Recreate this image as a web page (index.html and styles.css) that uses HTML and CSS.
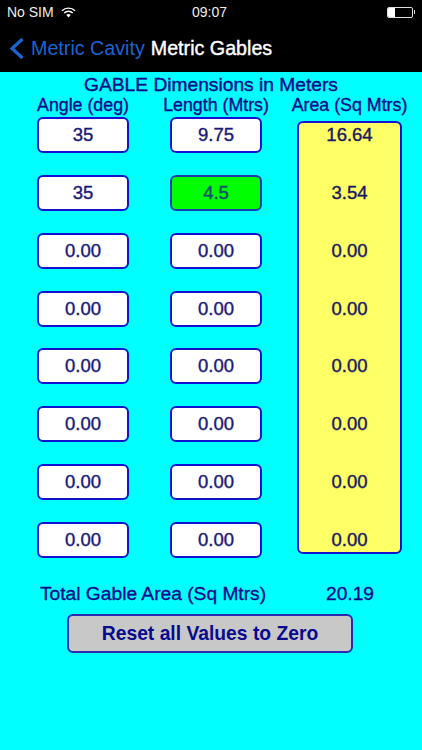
FILE: index.html
```html
<!DOCTYPE html>
<html lang="en">

<head>
    <meta charset="UTF-8">
    <meta name="viewport" content="width=device-width, initial-scale=1.0">
    <link rel="stylesheet" href="styles.css">
    <title>Metric Gables</title>
</head>

<body>
    <!-- status bar and nav -->
    <header class="top-bar">
        <div class="status-bar">
            <div class="status-left">
                <span>No SIM</span>
                <svg class="wifi" width="15" height="11" viewBox="0 0 15 11">
                    <path d="M1 3.8 A9.2 9.2 0 0 1 14 3.8" fill="none" stroke="#fff" stroke-width="1.4" />
                    <path d="M3.2 6 A6 6 0 0 1 11.8 6" fill="none" stroke="#fff" stroke-width="1.4" />
                    <path d="M5.3 8.1 A3 3 0 0 1 9.7 8.1 L7.5 10.4 Z" fill="#fff" />
                </svg>
            </div>
            <span class="status-time">09:07</span>
            <div class="battery">
                <div class="battery-body">
                    <div class="battery-level"></div>
                </div>
                <div class="battery-tip"></div>
            </div>
        </div>
        <nav class="nav-bar">
            <svg class="back-icon" width="16" height="23" viewBox="0 0 16 23">
                <path d="M13.5 2 L3 11.5 L13.5 21" fill="none" stroke="#1c64d2" stroke-width="3.2" />
            </svg>
            <span class="back-label">Metric Cavity</span>
            <span class="nav-title">Metric Gables</span>
        </nav>
    </header>

    <main class="content">
        <h1 class="page-title">GABLE Dimensions in Meters</h1>

        <div class="table">
            <div class="column column-angle">
                <div class="column-head">Angle (deg)</div>
                <div class="field">35</div>
                <div class="field">35</div>
                <div class="field">0.00</div>
                <div class="field">0.00</div>
                <div class="field">0.00</div>
                <div class="field">0.00</div>
                <div class="field">0.00</div>
                <div class="field">0.00</div>
            </div>
            <div class="column column-length">
                <div class="column-head">Length (Mtrs)</div>
                <div class="field">9.75</div>
                <div class="field field-active">4.5</div>
                <div class="field">0.00</div>
                <div class="field">0.00</div>
                <div class="field">0.00</div>
                <div class="field">0.00</div>
                <div class="field">0.00</div>
                <div class="field">0.00</div>
            </div>
            <div class="column column-area">
                <div class="column-head">Area (Sq Mtrs)</div>
                <div class="area-box">
                    <span>16.64</span>
                    <span>3.54</span>
                    <span>0.00</span>
                    <span>0.00</span>
                    <span>0.00</span>
                    <span>0.00</span>
                    <span>0.00</span>
                    <span>0.00</span>
                </div>
            </div>
        </div>

        <div class="total-row">
            <span class="total-label">Total Gable Area (Sq Mtrs)</span>
            <span class="total-value">20.19</span>
        </div>

        <button class="reset-button">Reset all Values to Zero</button>
    </main>
</body>

</html>
```

FILE: styles.css
```css
/* page */
body {
    margin: 0;
    width: 422px;
    height: 750px;
    overflow: hidden;
    background-color: #00ffff;
    font-family: "Liberation Sans", Arial, sans-serif;
    color: #0a0a8c;
}

/* top black area */
.top-bar {
    height: 72px;
    background-color: #000;
    color: #fff;
}

.status-bar {
    height: 24px;
    display: flex;
    align-items: center;
    justify-content: space-between;
    padding: 0 7px;
    font-size: 14px;
    position: relative;
    color: #eee;
}

.status-left {
    display: flex;
    align-items: center;
    gap: 7px;
}

.status-time {
    position: absolute;
    left: 192px;
}

.battery {
    display: flex;
    align-items: center;
}

.battery-body {
    width: 24px;
    height: 9px;
    border: 1px solid #ddd;
    border-radius: 2px;
    overflow: hidden;
}

.battery-level {
    width: 7px;
    height: 100%;
    background-color: #fff;
}

.battery-tip {
    width: 1.5px;
    height: 4px;
    background-color: #ddd;
    margin-left: 1px;
}

.nav-bar {
    height: 48px;
    display: flex;
    align-items: center;
    padding-left: 9px;
}

.back-icon {
    margin-right: 6px;
}

.back-label {
    font-size: 19.7px;
    color: #1c64d2;
    margin-right: 6px;
}

.nav-title {
    font-size: 19.7px;
    color: #fff;
    -webkit-text-stroke: 0.4px #fff;
}

/* main content */
.content {
    display: flex;
    flex-direction: column;
    align-items: center;
}

.page-title {
    margin: 2px 0 0;
    height: 21px;
    line-height: 21px;
    font-size: 19.2px;
    font-weight: normal;
    -webkit-text-stroke: 0.4px #0a0a8c;
}

.table {
    width: 100%;
    display: flex;
    box-sizing: border-box;
    padding-left: 37px;
}

.column {
    display: flex;
    flex-direction: column;
    align-items: center;
    gap: 21.9px;
}

.column-angle {
    width: 92px;
    margin-right: 41px;
}

.column-length {
    width: 92px;
    margin-right: 35px;
}

.column-area {
    width: 105px;
    gap: 0;
}

.column-head {
    height: 22px;
    margin-bottom: -22px;
    line-height: 21px;
    white-space: nowrap;
    font-size: 17.8px;
    -webkit-text-stroke: 0.35px #0a0a8c;
}

.column-area .column-head {
    margin-bottom: 0;
}

.field {
    box-sizing: border-box;
    width: 92px;
    height: 36px;
    border: 2px solid #1212d0;
    border-radius: 6px;
    background-color: #fff;
    display: flex;
    align-items: center;
    justify-content: center;
    font-size: 18.5px;
    color: #1a1a78;
    -webkit-text-stroke: 0.4px #1a1a78;
}

.field-active {
    background-color: #00ff00;
    border-color: #1a3cb0;
    color: #14506e;
    -webkit-text-stroke-color: #14506e;
}

.area-box {
    box-sizing: border-box;
    width: 105px;
    height: 433px;
    margin-top: 4px;
    border: 2px solid #1212d0;
    border-radius: 6px;
    background-color: #ffff66;
    display: flex;
    flex-direction: column;
    justify-content: space-between;
    align-items: center;
    font-size: 18.5px;
    line-height: 24px;
    color: #1a1a60;
    -webkit-text-stroke: 0.4px #1a1a60;
}

/* total and reset */
.total-row {
    width: 100%;
    height: 22px;
    margin-top: 25px;
    display: flex;
    align-items: center;
    font-size: 19.2px;
    -webkit-text-stroke: 0.35px #0a0a8c;
}

.total-label {
    margin-left: 40px;
    width: 286px;
    white-space: nowrap;
}

.reset-button {
    box-sizing: border-box;
    width: 286px;
    height: 39px;
    margin: 9px 2px 0 0;
    border: 2px solid #2a2ab4;
    border-radius: 6px;
    background-color: #c8c8c8;
    color: #0a0a8c;
    font-family: "Liberation Sans", Arial, sans-serif;
    font-size: 19.3px;
    font-weight: bold;
    padding: 0;
}
```
